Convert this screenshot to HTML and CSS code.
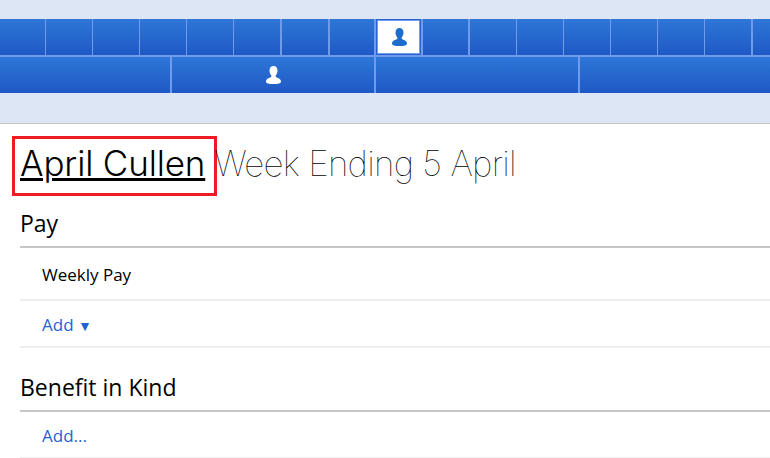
FILE: index.html
```html
<!DOCTYPE html>
<html lang="en">
<head>
    <meta charset="UTF-8">
    <title>April Cullen Week Ending 5 April</title>
    <link rel="stylesheet" href="styles.css">
</head>
<body>
    <!-- Week and employee strips -->
    <div class="strip">
        <div class="strip-row weeks">
            <div class="cell w46"></div>
            <div class="cell"></div>
            <div class="cell"></div>
            <div class="cell"></div>
            <div class="cell"></div>
            <div class="cell thick w48"></div>
            <div class="cell thick w48"></div>
            <div class="cell thick w46"></div>
            <div class="cell selected">
                <svg class="person" viewBox="0 0 15 18"><path d="M7.500 0C5 0 3.500 1.800 3.500 4.500C3.500 6.500 4.300 8.400 5.300 9.500L5.300 11C3.500 12 0 12.500 0 15.500C0 17.500 3 18 7.500 18S15 17.500 15 15.500C15 12.500 11.500 12 9.700 11L9.700 9.500C10.700 8.400 11.500 6.500 11.500 4.500C11.500 1.800 10 0 7.500 0Z"/></svg>
            </div>
            <div class="cell thick w47"></div>
            <div class="cell"></div>
            <div class="cell"></div>
            <div class="cell"></div>
            <div class="cell"></div>
            <div class="cell"></div>
            <div class="cell thick w48"></div>
            <div class="cell last"></div>
        </div>
        <div class="strip-row people">
            <div class="cell thick p172"></div>
            <div class="cell thick p204">
                <svg class="person white" viewBox="0 0 15 18"><path d="M7.500 0C5 0 3.500 1.800 3.500 4.500C3.500 6.500 4.300 8.400 5.300 9.500L5.300 11C3.500 12 0 12.500 0 15.500C0 17.500 3 18 7.500 18S15 17.500 15 15.500C15 12.500 11.500 12 9.700 11L9.700 9.500C10.700 8.400 11.500 6.500 11.500 4.500C11.500 1.800 10 0 7.500 0Z"/></svg>
            </div>
            <div class="cell thick p204"></div>
            <div class="cell last"></div>
        </div>
    </div>

    <div class="content">
        <h1 class="title">
            <span class="name-box"><a class="name" href="#">April Cullen</a></span>
            <span class="week">Week Ending 5 April</span>
        </h1>

        <h2 class="section-head">Pay</h2>
        <div class="line-item">Weekly Pay</div>
        <div class="line-item add"><a href="#">Add <span class="caret">▼</span></a></div>

        <h2 class="section-head second">Benefit in Kind</h2>
        <div class="line-item add"><a href="#">Add...</a></div>
    </div>
</body>
</html>
```

FILE: styles.css
```css
* {
    margin: 0;
    padding: 0;
    box-sizing: border-box;
}

body {
    height: 458px;
    overflow: hidden;
    background: #fff;
    font-family: "Open Sans", "Noto Sans", sans-serif;
    color: #000;
}

a {
    color: #1f62d6;
    text-decoration: none;
}

/* Top strips */
.strip {
    height: 124px;
    padding-top: 19px;
    background: #dde6f5;
    border-bottom: 1px solid #c8c8c8;
}

.strip-row {
    display: flex;
    height: 36px;
}

.people {
    height: 38px;
    border-top: 2px solid #6f9bea;
}

.cell {
    flex: none;
    width: 47px;
    display: flex;
    align-items: center;
    justify-content: center;
    background: linear-gradient(#2d76d6, #1f59c6);
    border-right: 1px solid #6f9bea;
}

.thick { border-right-width: 2px; }
.w46 { width: 46px; }
.w47 { width: 47px; }
.w48 { width: 48px; }
.p172 { width: 172px; }
.p204 { width: 204px; }

.last {
    flex: 1;
    border-right: 0;
}

.selected {
    width: 45px;
    margin-right: 2px;
    padding-left: 2px;
    background: #fff;
    border: 1px solid #2a63cf;
    outline: 1px solid #6f9bea;
    outline-offset: -2px;
    box-shadow: 2px 0 0 #6f9bea;
}

.person {
    flex: none;
    width: 15px;
    height: 18px;
    fill: #1e6ccb;
}

.person.white { fill: #fff; }

/* Page content */
.content {
    padding-left: 20px;
}

.title {
    display: flex;
    align-items: baseline;
    margin-top: 12px;
    font-family: Inter, sans-serif;
    font-size: 35px;
    font-weight: 300;
    line-height: 40px;
    white-space: nowrap;
}

.name-box {
    margin-left: -8px;
    padding: 4px 9px 10px 5px;
    border: 3px solid #ed1c24;
    letter-spacing: -0.15px;
}

.name {
    color: #000;
    text-decoration: underline;
}

.week {
    margin-left: -3px;
    font-weight: 100;
    letter-spacing: -0.75px;
}

.section-head {
    margin-top: 14px;
    padding-bottom: 10px;
    border-bottom: 2px solid #c8c8c8;
    font-size: 23px;
    font-weight: 400;
    line-height: 26px;
}

.section-head.second {
    margin-top: 26px;
}

.line-item {
    height: 53px;
    padding-left: 22px;
    border-bottom: 2px solid #eee;
    font-size: 17px;
    line-height: 53px;
}

.line-item.add {
    height: 47px;
    line-height: 47px;
}

.caret {
    font-size: 14px;
}
```
